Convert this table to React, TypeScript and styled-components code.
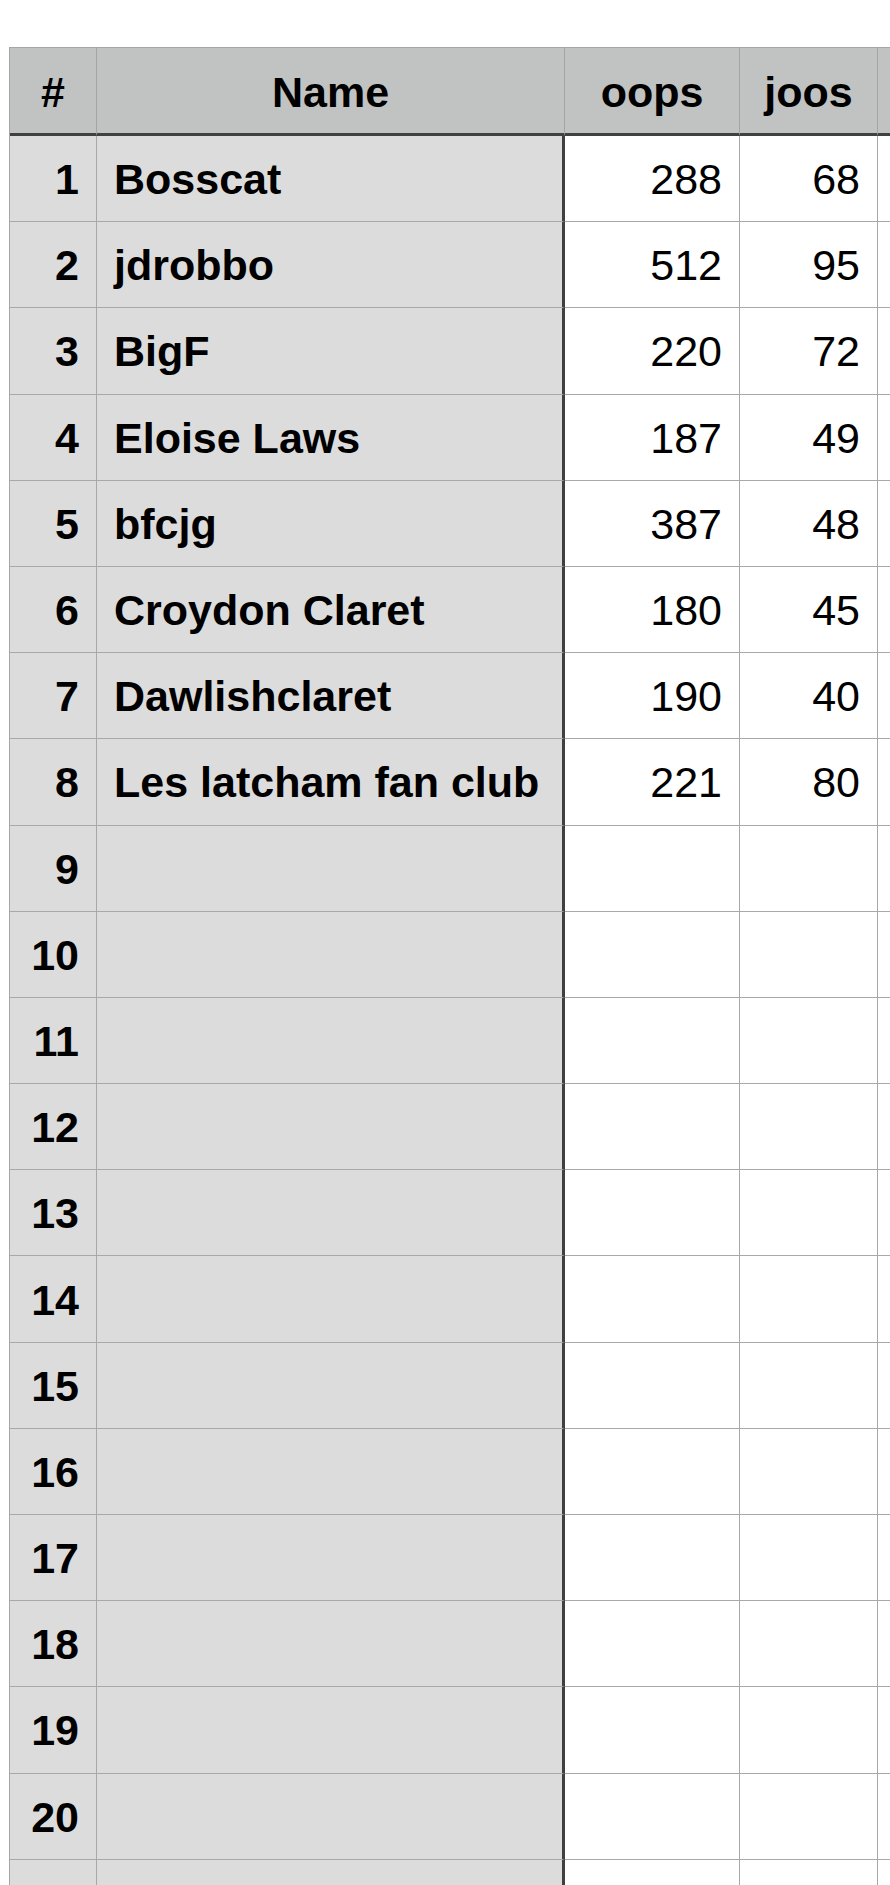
import styled, {createGlobalStyle} from "styled-components";

type PlayerType = {
    name: string,
    oops: number,
    joos: number,
}

const players: PlayerType[] = [
    {name: "Bosscat", oops: 288, joos: 68},
    {name: "jdrobbo", oops: 512, joos: 95},
    {name: "BigF", oops: 220, joos: 72},
    {name: "Eloise Laws", oops: 187, joos: 49},
    {name: "bfcjg", oops: 387, joos: 48},
    {name: "Croydon Claret", oops: 180, joos: 45},
    {name: "Dawlishclaret", oops: 190, joos: 40},
    {name: "Les latcham fan club", oops: 221, joos: 80},
]

// 20 numbered rows fit the screen, the 21st only peeks in at the bottom
const ROW_COUNT = 21
const NUMBERED_ROWS = 20

export default function App() {
    const rows = Array.from({length: ROW_COUNT}, (_, i) => players[i])

    return (
        <>
            <GlobalStyle/>
            <Page>
                <Sheet>
                    <HeadCell>#</HeadCell>
                    <HeadCell>Name</HeadCell>
                    <HeadCell>oops</HeadCell>
                    <HeadCell>joos</HeadCell>
                    <HeadCell/>

                    {rows.map((player, i) => (
                        <Row key={i}>
                            <IndexCell>{i < NUMBERED_ROWS ? i + 1 : null}</IndexCell>
                            <NameCell>{player?.name}</NameCell>
                            <ValueCell>{player?.oops}</ValueCell>
                            <ValueCell>{player?.joos}</ValueCell>
                            <ValueCell/>
                        </Row>
                    ))}
                </Sheet>
            </Page>
        </>
    );
}

const GlobalStyle = createGlobalStyle`
    * {
        box-sizing: border-box;
    }

    html, body {
        margin: 0;
        padding: 0;
        background: #ffffff;
        overflow: hidden;
    }
`

const Page = styled.div`
    width: 890px;
    height: 1885px;
    overflow: hidden;
    padding: 47px 0 0 9px;
    font-family: "Liberation Sans", Arial, Helvetica, sans-serif;
    font-size: 43px;
    color: #000000;
`

const Sheet = styled.div`
    display: grid;
    grid-template-columns: 87px 468px 175px 138px 200px;
    grid-template-rows: 88px;
    grid-auto-rows: 86.2px;
    width: max-content;
    border-top: 1px solid #a6a6a6;
    border-left: 1px solid #a6a6a6;
`

const Row = styled.div`
    display: contents;
`

const Cell = styled.div`
    display: flex;
    align-items: center;
    padding-top: 2px;
    border-right: 1px solid #a8a8a8;
    border-bottom: 1px solid #a8a8a8;
    white-space: nowrap;
    overflow: hidden;
`

const HeadCell = styled(Cell)`
    justify-content: center;
    padding-top: 3px;
    background: #c1c3c2;
    font-weight: 700;
    border-bottom: 3px solid #404040;
    border-right: 1px solid #a3a5a4;
`

const IndexCell = styled(Cell)`
    justify-content: flex-end;
    padding-right: 17px;
    background: #dcdcdc;
    font-weight: 700;
`

const NameCell = styled(Cell)`
    padding-left: 17px;
    background: #dcdcdc;
    font-weight: 700;
    border-right: 3px solid #404040;
`

const ValueCell = styled(Cell)`
    justify-content: flex-end;
    padding-right: 17px;
    background: #ffffff;
`
